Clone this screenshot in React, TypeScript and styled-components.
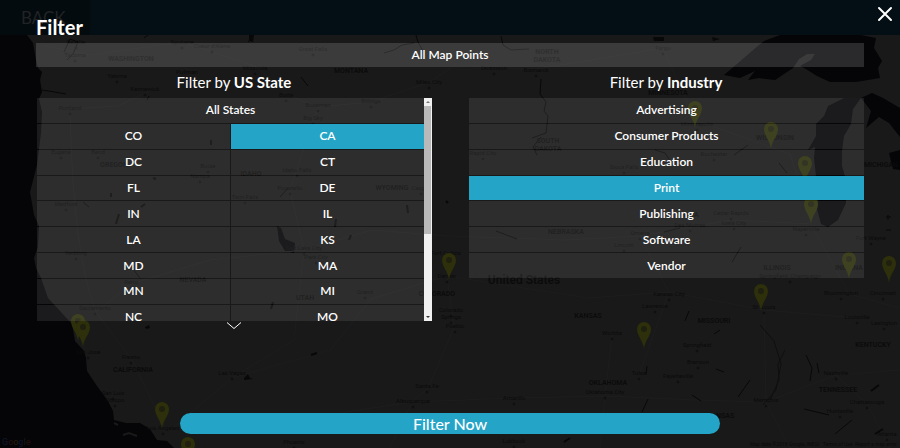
import React, { useRef, useState } from "react";
import styled, { createGlobalStyle } from "styled-components";

const accent = "#24a4c6";

const GlobalStyle = createGlobalStyle`
  *, *::before, *::after { box-sizing: border-box; }
  body { margin: 0; background: #191919; }
`;

const Stage = styled.div`
  position: relative;
  display: grid;
  min-height: 100vh;
  overflow: hidden;
  font-family: Lato, "Open Sans", sans-serif;
  color: #fff;
`;

/* ---------- dimmed page behind the dialog ---------- */

const Backdrop = styled.div`
  position: absolute;
  inset: 0;
  display: flex;
  flex-direction: column;
`;

const TopBar = styled.div`
  flex: none;
  display: flex;
  height: 35px;
  background: #030f14;
`;

const BackLabel = styled.div`
  display: flex;
  align-items: center;
  padding: 0 24px 0 21px;
  background: #030b0f;
  color: #212325;
  font-size: 17px;
`;

const MapDrawing = styled.svg`
  flex: 1;
  min-height: 0;
  width: 100%;
  display: block;
  background: #191919;
  font-family: Roboto, sans-serif;
`;

/* ---------- dialog ---------- */

const Dialog = styled.section`
  position: relative;
  display: flex;
  flex-direction: column;
  padding: 15px 4% 14px;
`;

const CloseButton = styled.button`
  position: absolute;
  top: 6px;
  right: 7px;
  display: flex;
  padding: 0;
  border: 0;
  background: none;
  color: #fff;
  cursor: pointer;
`;

const Title = styled.h1`
  margin: 0;
  font-size: 20px;
  line-height: 24px;
  font-weight: 700;
`;

const Option = styled.button<{ $selected?: boolean; $wide?: boolean; $strong?: boolean }>`
  grid-column: ${(p) => (p.$wide ? "1 / -1" : "auto")};
  min-height: 24px;
  padding: 0;
  border: 0;
  background: ${(p) =>
    p.$selected ? accent : p.$strong ? "rgba(255, 255, 255, 0.15)" : "rgba(255, 255, 255, 0.09)"};
  color: #fff;
  font: 600 12px/24px Lato, "Open Sans", sans-serif;
  text-align: center;
  cursor: pointer;
`;

const AllPoints = styled(Option)`
  width: 100%;
  margin-top: 4px;
`;

const Columns = styled.div`
  display: grid;
  grid-template-columns: 1fr 1fr;
  column-gap: 36px;
`;

const Column = styled.div`
  display: flex;
  flex-direction: column;
`;

const Heading = styled.h2`
  margin: 0;
  padding-bottom: 1px;
  font-size: 15px;
  line-height: 30px;
  font-weight: 400;
  text-align: center;

  strong { font-weight: 700; }
`;

const ScrollFrame = styled.div`
  display: flex;
  height: 223px;
  margin-left: 1px;
`;

const StateScroller = styled.div`
  flex: 1;
  overflow-y: auto;
  scrollbar-width: none;

  &::-webkit-scrollbar { display: none; }
`;

const StateGrid = styled.div`
  display: grid;
  grid-template-columns: 1fr 1fr;
  grid-auto-rows: 1fr;
  gap: 1px;
  height: 361px;
`;

const IndustryGrid = styled.div`
  display: grid;
  grid-auto-rows: 1fr;
  gap: 1px;
  height: 180px;
  margin-left: 1px;
`;

const ScrollBar = styled.div`
  flex: none;
  display: flex;
  flex-direction: column;
  width: 8px;
  background: #f1f1f1;
`;

const ScrollTrack = styled.div`
  flex: 1;
  padding-right: 1px;
`;

const ScrollThumb = styled.div`
  height: 62%;
  background: #b9b9b9;
`;

const ScrollArrow = styled.svg`
  display: block;
  width: 8px;
  height: 8px;
`;

const MoreButton = styled.button`
  align-self: center;
  display: flex;
  padding: 0;
  border: 0;
  background: none;
  color: #fff;
  cursor: pointer;
`;

const ApplyButton = styled.button`
  align-self: center;
  width: 540px;
  max-width: 100%;
  margin-top: auto;
  padding: 0;
  border: 0;
  border-radius: 11px;
  background: ${accent};
  color: #fff;
  font: 500 16px/21px Lato, "Open Sans", sans-serif;
  cursor: pointer;
`;

/* ---------- map data ---------- */

type Label = [text: string, x: number, y: number, size?: number];

const regions: Label[] = [
  ["WASHINGTON", 131, 61], ["MONTANA", 351, 73], ["NORTH", 547, 54], ["DAKOTA", 547, 62],
  ["MINNESOTA", 668, 95], ["WISCONSIN", 775, 140], ["SOUTH", 548, 143], ["DAKOTA", 548, 151],
  ["OREGON", 114, 167], ["IDAHO", 251, 176], ["NEVADA", 193, 282], ["WYOMING", 392, 190],
  ["NEBRASKA", 566, 234], ["COLORADO", 437, 296], ["UTAH", 305, 300], ["KANSAS", 588, 318],
  ["MISSOURI", 714, 323], ["ILLINOIS", 777, 270], ["INDIANA", 849, 270], ["IOWA", 690, 217],
  ["KENTUCKY", 873, 347], ["TENNESSEE", 838, 392], ["OKLAHOMA", 608, 385], ["ARKANSAS", 716, 418],
  ["CALIFORNIA", 133, 372], ["MICHIGAN", 881, 167], ["United States", 524, 284, 12],
];

const cities: Label[] = [
  ["Seattle", 76, 44], ["Tacoma", 75, 57], ["Spokane", 182, 44], ["Coeur d'Alene", 212, 48],
  ["Yakima", 117, 78], ["Kennewick", 145, 91], ["Pullman", 187, 74], ["Missoula", 255, 70],
  ["Butte", 286, 97], ["Great Falls", 313, 51], ["Miles City", 429, 84], ["Bozeman", 318, 107],
  ["Billings", 371, 103], ["Big Sky", 313, 120], ["Dickinson", 494, 70], ["Bismarck", 536, 72],
  ["Fargo", 663, 50], ["Portland", 70, 110], ["Eugene", 61, 154], ["Bend", 98, 154],
  ["Boise", 208, 168], ["Nampa", 200, 178], ["Idaho Falls", 297, 172], ["Pocatello", 290, 190],
  ["Twin Falls", 245, 199], ["Medford", 66, 206], ["Redding", 76, 255], ["Reno", 131, 284],
  ["Salt Lake City", 304, 250], ["Park City", 316, 259], ["Casper", 421, 190], ["Rapid City", 483, 155],
  ["Grand", 365, 294],
  ["Sacramento", 95, 310], ["San Jose", 88, 354], ["Fresno", 131, 359], ["San Luis", 113, 395],
  ["Obispo", 115, 402], ["Las Vegas", 232, 375], ["Los Angeles", 163, 430], ["Phoenix", 294, 444],
  ["Fort Collins", 446, 255], ["Denver", 447, 278], ["Colorado", 451, 312], ["Springs", 451, 319],
  ["Pueblo", 455, 328], ["Santa Fe", 427, 388], ["Albuquerque", 413, 403], ["Amarillo", 514, 400],
  ["Lubbock", 514, 443], ["Wichita", 612, 335], ["Lawrence", 655, 308], ["Kansas City", 669, 296],
  ["Springfield", 697, 347], ["Branson", 698, 364], ["Tulsa", 639, 375], ["Oklahoma City", 605, 394],
  ["Fayetteville", 678, 378], ["St. Louis", 764, 309], ["Memphis", 766, 402], ["Nashville", 836, 375],
  ["Louisville", 857, 319], ["Lexington", 884, 325], ["Chattanooga", 867, 404], ["Huntsville", 840, 413],
  ["Atlanta", 887, 436], ["Cincinnati", 883, 295], ["Bloomington", 841, 295],
  ["Springfield, Champaign", 790, 278], ["Fort Wayne", 871, 240], ["Naperville", 806, 231],
  ["Rochester", 714, 156], ["Sioux Falls", 624, 169],
  ["Minneapolis", 697, 126], ["Cedar Rapids", 731, 215], ["Iowa City", 734, 225], ["Omaha", 640, 235],
  ["Des Moines", 690, 227], ["Lincoln", 624, 247],
];

const pins: [number, number][] = [
  [695, 108], [771, 129], [805, 163], [811, 204], [849, 259], [889, 263], [761, 291],
  [644, 329], [449, 260], [78, 321], [83, 327], [162, 409], [188, 444],
];

function MapPin({ x, y }: { x: number; y: number }) {
  return (
    <g transform={`translate(${x} ${y})`}>
      <path d="M0 20C-1 11-7 7-7 0A7 7 0 0 1 7 0C7 7 1 11 0 20Z" fill="#2d300a" />
      <circle r="3" fill="#1f200f" />
    </g>
  );
}

function MapLabels({ items, size, weight }: { items: Label[]; size: number; weight: number }) {
  return (
    <g fill="#0b0b0b" fontWeight={weight} textAnchor="middle">
      {items.map(([text, x, y, own]) => (
        <text key={`${text}-${x}`} x={x} y={y} fontSize={own ?? size}>{text}</text>
      ))}
    </g>
  );
}

function CountryMap() {
  return (
    <MapDrawing viewBox="0 35 900 413" preserveAspectRatio="xMidYMid slice" aria-hidden="true">
      <g fill="#050508">
        <path d="M0 35H27L33 43 36 60 38 68 42 72 40 80 42 92 39 99 42 112 41 133 37 165 30 192 34 215 39 226 38 247 34 258 36 268 41 278 48 298 60 311 72 324 75 341 84 351 86 358 87 371 97 386 108 401 113 411 114 420 126 423 140 423 150 429 157 440 167 441 174 448H0Z" />
        <path d="M724 75 737 64 752 51 764 41 780 35H861L876 38 874 48 882 61 878 68 880 78 856 82 830 82 817 76 806 69 800 66 811 60 815 54 807 54 799 59 793 68 775 80 759 78 748 80 755 71 740 78Z" />
        <path d="M828 106 844 98H861L853 109 851 124 844 136 842 151 842 166 846 180 846 203 838 220 828 227 821 224 817 209 820 189 816 176 814 158 815 147 808 150 816 136 816 124 824 116Z" />
        <path d="M861 98 872 93 883 98 900 108V137L889 123 879 117 866 128 871 111Z M889 153 900 150V170L893 169Z" />
        <path d="M277 226 281 228 285 239 295 243 294 253 285 251 279 241Z" />
      </g>
      <path d="M123 435l6-2 8 3M114 423l4 2" stroke="#191919" fill="none" strokeWidth="2" />
      <g fill="none" stroke="#1d1d1d" strokeWidth="1">
        <path d="M70 112C72 180 76 260 96 312L132 360 166 430M70 109 118 106 150 91M41 45 90 55 182 42 255 66 290 96 318 107 371 102 430 82 455 65 537 69 663 48 695 120 790 154 812 222" />
        <path d="M96 312 131 284 210 260 304 250 372 230 447 236 566 240 640 236 731 220 811 224 849 294 900 308M304 250 290 190 318 107M304 250 294 340 232 378 170 430M232 378 330 350 371 299 447 276 588 298 669 292 764 310 857 318M447 276 454 328 428 388 412 402 390 448M294 420 412 402 514 398 605 396 695 400 766 402 836 375 900 370M612 335 605 396 600 448M640 236 669 292 640 372M764 310 766 402 790 448M836 375 867 404 890 448" />
      </g>
      <g fill="none" stroke="#080808" strokeWidth="1">
        <path d="M64 52 70 39 78 42 73 54 67 60M42 90 55 92 66 94M144 38l4-3M248 42l5-6M384 53l10-3 8-5 12-2M416 35l2 7 5 9M501 36l2 9 8 5 18-1M541 79l-1 15 6 8-2 9 4 5-2 17-14 5M541 137l-8 10 4 8M301 77l7 9M280 197l8-9M83 202l6 5M133 269l7 9M149 96l-2 4M655 150l10 3 8 12M748 145l-14 10M779 163l8 10M664 232l16-4M741 247l-9 15M496 231l21 8M806 355l6 13-2 13M819 373l-2-10M750 380l-12 17M648 399l-6 13M692 395l9 6M689 311l-4 10M716 369l8 3M720 330l-6 4M804 409l25 6M835 434l17-14M647 366l-1 8" />
        <path d="M760 325l14 16 7 23-5 26-13 15M785 350l-7 14 1 16-9 20" stroke="#0f0f0f" />
        <path d="M145 204l-4 3M111 193v4M119 214l-3 10M153 178l3 1M211 145v-5M336 219l-1 8M349 240l2-5M407 205l1 8M273 302l-2 7M446 201l2 2M311 355l6-2M570 438l-6 4M871 391l8-6M883 429l-8 5" strokeWidth="2" />
      </g>
      <g fill="#080808">
        <path d="M145 327l4-2 1 3-4 1ZM244 378l4-4 2 4 3 1-9 1ZM249 35h5l-1 7-4-1ZM653 37h11v4h-10ZM712 37l8 2-7 2Z" />
      </g>
      <g fill="none" stroke="#0d0d0d">
        {cities.map(([text, x, y]) => (
          <circle key={`${text}-${x}`} cx={x} cy={y + 4} r="1" />
        ))}
      </g>
      <MapLabels items={regions} size={7} weight={600} />
      <MapLabels items={cities} size={6} weight={400} />
      {pins.map(([x, y]) => (
        <MapPin key={`${x}-${y}`} x={x} y={y} />
      ))}
      <g fill="#0b0b0b" fontSize="5">
        <text x="750" y="446">Map data ©2018 Google, INEGI</text>
        <text x="823" y="446">Terms of Use</text>
        <text x="855" y="446">Report a map error</text>
      </g>
      <text x="2" y="445" fontSize="9" fontWeight="500">
        <tspan fill="#0d1424">G</tspan><tspan fill="#200f0e">o</tspan><tspan fill="#1f1b0b">o</tspan>
        <tspan fill="#0d1424">g</tspan><tspan fill="#0d1b11">l</tspan><tspan fill="#200f0e">e</tspan>
      </text>
      <g fill="none" stroke="#090909">
        <path d="M886 217h5M888 215v5M886 230h5" />
      </g>
    </MapDrawing>
  );
}

/* ---------- filter data ---------- */

const states = [
  "CO", "CA", "DC", "CT", "FL", "DE", "IN", "IL", "LA", "KS", "MD", "MA", "MN", "MI",
  "NC", "MO", "NJ", "NE", "NY", "NV", "OR", "OH", "TX", "PA", "VA", "UT",
];

const industries = [
  "Advertising", "Consumer Products", "Education", "Print", "Publishing", "Software", "Vendor",
];

export default function App() {
  const [region, setRegion] = useState("CA");
  const [industry, setIndustry] = useState("Print");
  const [offset, setOffset] = useState(0);
  const scroller = useRef<HTMLDivElement>(null);

  const clear = () => {
    setRegion("");
    setIndustry("");
  };

  return (
    <Stage>
      <GlobalStyle />
      <Backdrop>
        <TopBar><BackLabel>BACK</BackLabel></TopBar>
        <CountryMap />
      </Backdrop>

      <Dialog role="dialog" aria-labelledby="filter-title">
        <Title id="filter-title">Filter</Title>
        <CloseButton type="button" aria-label="Close">
          <svg width="16" height="16" viewBox="0 0 16 16" fill="none" stroke="currentColor" strokeWidth="2" strokeLinecap="round">
            <path d="M2 2 14 14M14 2 2 14" />
          </svg>
        </CloseButton>
        <AllPoints type="button" $strong onClick={clear}>All Map Points</AllPoints>

        <Columns>
          <Column>
            <Heading>Filter by <strong>US State</strong></Heading>
            <ScrollFrame>
              <StateScroller ref={scroller} onScroll={(e) => setOffset(e.currentTarget.scrollTop)}>
                <StateGrid>
                  <Option type="button" $wide onClick={() => setRegion("")}>All States</Option>
                  {states.map((name) => (
                    <Option
                      key={name}
                      type="button"
                      $selected={region === name}
                      aria-pressed={region === name}
                      onClick={() => setRegion(name)}
                    >
                      {name}
                    </Option>
                  ))}
                </StateGrid>
              </StateScroller>
              <ScrollBar aria-hidden="true">
                <ScrollArrow viewBox="0 0 8 8"><path d="M2 5 4 3 6 5Z" fill="#777" /></ScrollArrow>
                <ScrollTrack>
                  <ScrollThumb style={{ transform: `translateY(${offset * 0.57}px)` }} />
                </ScrollTrack>
                <ScrollArrow viewBox="0 0 8 8"><path d="M2 3h4L4 5Z" fill="#333" /></ScrollArrow>
              </ScrollBar>
            </ScrollFrame>
            <MoreButton
              type="button"
              aria-label="More states"
              onClick={() => scroller.current?.scrollBy({ top: 52, behavior: "smooth" })}
            >
              <svg width="16" height="9" viewBox="0 0 16 9" fill="none" stroke="currentColor" strokeWidth="1">
                <path d="M1 1.5 8 7.5 15 1.5" />
              </svg>
            </MoreButton>
          </Column>

          <Column>
            <Heading>Filter by <strong>Industry</strong></Heading>
            <IndustryGrid>
              {industries.map((name) => (
                <Option
                  key={name}
                  type="button"
                  $selected={industry === name}
                  aria-pressed={industry === name}
                  onClick={() => setIndustry(name)}
                >
                  {name}
                </Option>
              ))}
            </IndustryGrid>
          </Column>
        </Columns>

        <ApplyButton type="button">Filter Now</ApplyButton>
      </Dialog>
    </Stage>
  );
}
